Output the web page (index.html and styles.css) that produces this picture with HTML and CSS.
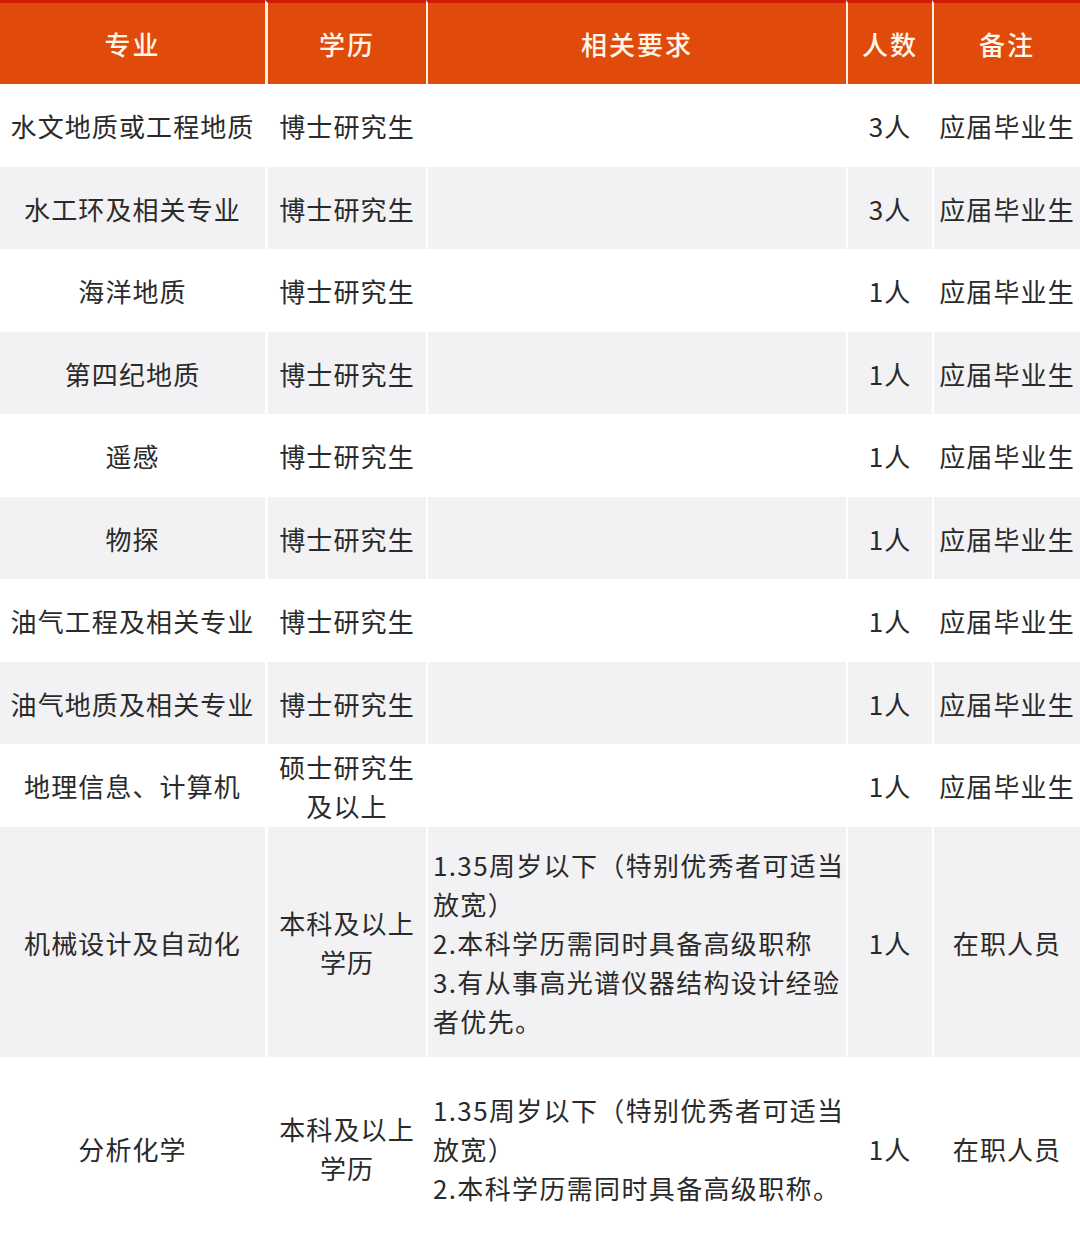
FILE: index.html
```html
<!DOCTYPE html>
<html lang="zh-CN">
<head>
<meta charset="utf-8">
<title>招聘岗位</title>
<link rel="stylesheet" href="styles.css">
</head>
<body>
<table class="jobs">
  <colgroup>
    <col class="c1"><col class="c2"><col class="c3"><col class="c4"><col class="c5">
  </colgroup>
  <thead>
    <tr class="head">
      <th>专业</th><th class="b3">学历</th><th>相关要求</th><th>人数</th><th>备注</th>
    </tr>
  </thead>
  <tbody>
    <tr class="r odd h83"><td>水文地质或工程地质</td><td class="b3">博士研究生</td><td></td><td>3人</td><td>应届毕业生</td></tr>
    <tr class="r even h82"><td>水工环及相关专业</td><td class="b3">博士研究生</td><td></td><td>3人</td><td>应届毕业生</td></tr>
    <tr class="r odd h83"><td>海洋地质</td><td class="b3">博士研究生</td><td></td><td>1人</td><td>应届毕业生</td></tr>
    <tr class="r even h82"><td>第四纪地质</td><td class="b3">博士研究生</td><td></td><td>1人</td><td>应届毕业生</td></tr>
    <tr class="r odd h83"><td>遥感</td><td class="b3">博士研究生</td><td></td><td>1人</td><td>应届毕业生</td></tr>
    <tr class="r even h82"><td>物探</td><td class="b3">博士研究生</td><td></td><td>1人</td><td>应届毕业生</td></tr>
    <tr class="r odd h83"><td>油气工程及相关专业</td><td class="b3">博士研究生</td><td></td><td>1人</td><td>应届毕业生</td></tr>
    <tr class="r even h82"><td>油气地质及相关专业</td><td class="b3">博士研究生</td><td></td><td>1人</td><td>应届毕业生</td></tr>
    <tr class="r odd h83"><td>地理信息、计算机</td><td class="b3">硕士研究生<br>及以上</td><td></td><td>1人</td><td>应届毕业生</td></tr>
    <tr class="r even h230"><td>机械设计及自动化</td><td class="b3">本科及以上<br>学历</td><td class="req">1.35周岁以下（特别优秀者可适当<br>放宽）<br>2.本科学历需同时具备高级职称<br>3.有从事高光谱仪器结构设计经验<br>者优先。</td><td>1人</td><td>在职人员</td></tr>
    <tr class="r odd h182"><td>分析化学</td><td class="b3">本科及以上<br>学历</td><td class="req">1.35周岁以下（特别优秀者可适当<br>放宽）<br>2.本科学历需同时具备高级职称。</td><td>1人</td><td>在职人员</td></tr>
  </tbody>
</table>
</body>
</html>
```

FILE: styles.css
```css
html, body {
  margin: 0;
  padding: 0;
  background: #ffffff;
}

body {
  width: 1080px;
  overflow: hidden;
  font-family: "Noto Sans CJK SC", "Noto Sans", sans-serif;
}

.jobs {
  width: 1080px;
  table-layout: fixed;
  border-collapse: separate;
  border-spacing: 0;
}

.c1 { width: 265px; }
.c2 { width: 161px; }
.c3 { width: 420px; }
.c4 { width: 86px; }
.c5 { width: 148px; }

.head th {
  height: 81px;
  padding: 0;
  background: #e04b0b;
  border-top: 3px solid #cf1a08;
  color: #fff6ea;
  font-size: 26px;
  font-weight: 500;
  letter-spacing: 2px;
  text-align: center;
  vertical-align: middle;
  line-height: 1;
}

.head th + th {
  border-left: 2px solid #fbeee2;
}

.head th.b3 {
  border-left-width: 3px;
}

.r td {
  padding: 0;
  color: #2a2a2a;
  font-size: 26px;
  font-weight: 400;
  letter-spacing: 1.1px;
  line-height: 39px;
  text-align: center;
  vertical-align: middle;
  white-space: nowrap;
}

.r td + td {
  border-left: 2px solid #ffffff;
}

.r td.b3 {
  border-left-width: 3px;
}

.r.odd td { background: #ffffff; }
.r.even td { background: #f2f1f3; }

.r td.req {
  text-align: left;
  padding-left: 5px;
  letter-spacing: 1.35px;
}

.h82 td { height: 82px; }
.h83 td { height: 83px; }
.h230 td { height: 230px; }
.h182 td { height: 182px; }
```
